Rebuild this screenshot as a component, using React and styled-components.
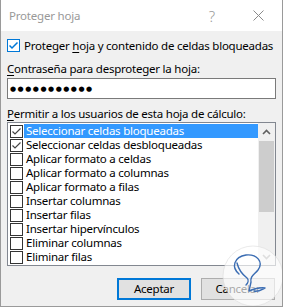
import React from "react";
import styled, { createGlobalStyle } from "styled-components";

const Global = createGlobalStyle`
  html, body { margin: 0; padding: 0; background: #ffffff; }
  body { font-family: "Noto Sans", "Open Sans", sans-serif; font-size: 11.5px; color: #000; }
  * { box-sizing: border-box; }
`;

const Window = styled.div`
  position: relative;
  width: 283px;
  height: 307px;
  background: #f0f0f0;
  border: 1px solid #9a9a9a;
  border-top: none;
  display: flex;
  flex-direction: column;
  overflow: hidden;
`;

const TitleBar = styled.div`
  height: 31px;
  background: #ffffff;
  display: flex;
  align-items: center;
  padding-left: 8px;
  padding-right: 1px;
  flex-shrink: 0;
`;

const Title = styled.div`
  flex: 1;
  color: #999999;
  font-size: 11.5px;
  letter-spacing: -0.2px;
`;

const CaptionButton = styled.div`
  width: 46px;
  height: 31px;
  display: flex;
  align-items: center;
  justify-content: center;
  color: #9a9a9a;
  font-size: 15px;
  font-weight: 300;
`;

const Body = styled.div`
  padding: 0 6px;
  display: flex;
  flex-direction: column;
  letter-spacing: -0.23px;
`;

const CheckRow = styled.label`
  margin-top: 8px;
  height: 13px;
  display: flex;
  align-items: center;
  gap: 4px;
  line-height: 15px;
  white-space: nowrap;
`;

const Box = styled.span`
  width: 13px;
  height: 13px;
  flex-shrink: 0;
  border: 1px solid ${(p) => (p.$focus ? "#0078d7" : "#333333")};
  background: #ffffff;
  display: flex;
  align-items: center;
  justify-content: center;
`;

const Label = styled.div`
  margin-top: ${(p) => p.$mt}px;
  line-height: 16px;
  height: 16px;
  white-space: nowrap;
`;

const U = styled.span`
  text-decoration: underline;
  text-underline-offset: 2px;
`;

const Input = styled.div`
  margin-top: 1px;
  height: 21px;
  width: 269px;
  background: #ffffff;
  border: 1px solid #7a7a7a;
  display: flex;
  align-items: center;
  padding-left: 2px;
  font-family: "DejaVu Sans", sans-serif;
  font-size: 7px;
  letter-spacing: 1.5px;
`;

const List = styled.div`
  height: 144px;
  width: 269px;
  background: #ffffff;
  border: 1px solid #828790;
  display: flex;
`;

const Items = styled.div`
  flex: 1;
  padding-top: 1px;
  display: flex;
  flex-direction: column;
`;

const Row = styled.div`
  height: 14px;
  display: flex;
  align-items: center;
  white-space: nowrap;
`;

const RowBox = styled(Box)`
  margin-left: 2px;
  margin-right: 1px;
`;

const RowText = styled.div`
  flex: 1;
  height: 14px;
  line-height: 14px;
  padding-left: 2px;
  background: ${(p) => (p.$selected ? "#3399ff" : "transparent")};
  color: ${(p) => (p.$selected ? "#ffffff" : "#000000")};
`;

const Scrollbar = styled.div`
  width: 17px;
  background: #f0f0f0;
  display: flex;
  flex-direction: column;
  align-items: center;
`;

const Arrow = styled.div`
  height: 17px;
  width: 17px;
  display: flex;
  align-items: center;
  justify-content: center;
  flex-shrink: 0;
`;

const Thumb = styled.div`
  width: 15px;
  height: 71px;
  margin-top: 1px;
  margin-right: 1px;
  background: #cdcdcd;
`;

const Spacer = styled.div`
  flex: 1;
`;

const Buttons = styled.div`
  margin-top: 12px;
  display: flex;
  justify-content: flex-end;
  gap: 10px;
  padding-right: 1px;
`;

const Button = styled.div`
  width: 74px;
  height: 22px;
  background: #e1e1e1;
  border: ${(p) => (p.$default ? "2px solid #0078d7" : "1px solid #adadad")};
  display: flex;
  align-items: center;
  justify-content: center;
  line-height: 16px;
`;

const Watermark = styled.svg`
  position: absolute;
  left: 220px;
  top: 245px;
  pointer-events: none;
`;

const Check = ({ color, w = 1.2 }) => (
  <svg width="11" height="11" viewBox="0 0 11 11">
    <path d="M1.5 5.5 L4 8 L9.5 2.5" fill="none" stroke={color} strokeWidth={w} />
  </svg>
);

const items = [
  ["Seleccionar celdas bloqueadas", true, true],
  ["Seleccionar celdas desbloqueadas", true, false],
  ["Aplicar formato a celdas", false, false],
  ["Aplicar formato a columnas", false, false],
  ["Aplicar formato a filas", false, false],
  ["Insertar columnas", false, false],
  ["Insertar filas", false, false],
  ["Insertar hipervínculos", false, false],
  ["Eliminar columnas", false, false],
  ["Eliminar filas", false, false],
];

export default function App() {
  return (
    <>
      <Global />
      <Window>
        <TitleBar>
          <Title>Proteger hoja</Title>
          <CaptionButton>?</CaptionButton>
          <CaptionButton>
            <svg width="11" height="11" viewBox="0 0 11 11">
              <path d="M0.5 0.5 L10.5 10.5 M10.5 0.5 L0.5 10.5" stroke="#8a8a8a" strokeWidth="1" />
            </svg>
          </CaptionButton>
        </TitleBar>
        <Body>
          <CheckRow>
            <Box $focus>
              <Check color="#0078d7" w={1.5} />
            </Box>
            <span>
              Proteger <U>h</U>oja y contenido de celdas bloqueadas
            </span>
          </CheckRow>
          <Label $mt={9}>
            <U>C</U>ontraseña para desproteger la hoja:
          </Label>
          <Input>●●●●●●●●●●●</Input>
          <Label $mt={7}>
            <U>P</U>ermitir a los usuarios de esta hoja de cálculo:
          </Label>
          <List>
            <Items>
              {items.map(([text, checked, selected]) => (
                <Row key={text}>
                  <RowBox>{checked && <Check color="#444444" />}</RowBox>
                  <RowText $selected={selected}>{text}</RowText>
                </Row>
              ))}
            </Items>
            <Scrollbar>
              <Arrow>
                <svg width="9" height="6" viewBox="0 0 9 6">
                  <path d="M1 5 L4.5 1.5 L8 5" fill="none" stroke="#606060" strokeWidth="1.6" />
                </svg>
              </Arrow>
              <Thumb />
              <Spacer />
              <Arrow>
                <svg width="9" height="6" viewBox="0 0 9 6">
                  <path d="M1 1 L4.5 4.5 L8 1" fill="none" stroke="#a0a0a0" strokeWidth="1.6" />
                </svg>
              </Arrow>
            </Scrollbar>
          </List>
          <Buttons>
            <Button $default>Aceptar</Button>
            <Button>Cancelar</Button>
          </Buttons>
        </Body>
        <Watermark width="63" height="63" viewBox="0 0 63 63">
          <circle cx="32" cy="31" r="30" fill="#ffffff" fillOpacity="0.65" stroke="#dcdcdc" strokeOpacity="0.6" />
          <path
            d="M18 29 C10 22 13 12 25 10 C36 9 43 17 37 25 C33 30 29 31 30 37 L28 46 C33 44 38 42 44 43 C40 45 37 47 33 46"
            fill="none"
            stroke="#3b6db3"
            strokeWidth="1.4"
            strokeLinecap="round"
            strokeLinejoin="round"
          />
          <path
            d="M16 18 C18 26 22 30 26 33 C28 35 27 38 25 40"
            fill="none"
            stroke="#3b6db3"
            strokeWidth="1.4"
            strokeLinecap="round"
          />
        </Watermark>
      </Window>
    </>
  );
}
